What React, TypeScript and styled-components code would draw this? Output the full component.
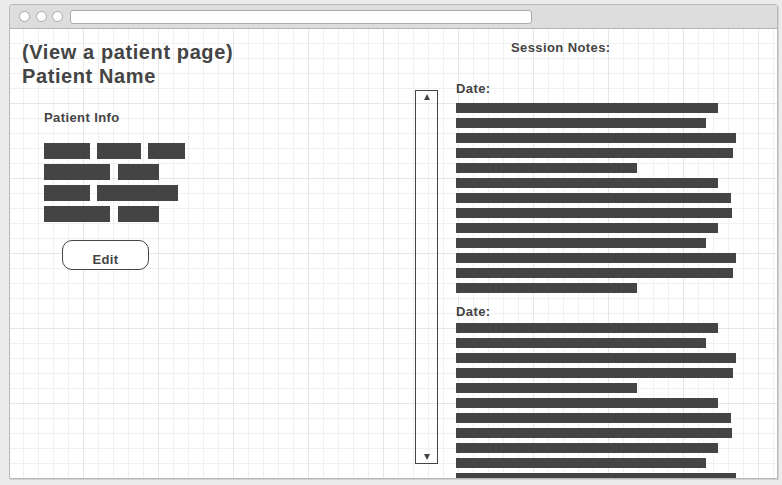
import React from "react";
import styled, { createGlobalStyle } from "styled-components";

const GlobalStyle = createGlobalStyle`
  html, body {
    margin: 0;
    padding: 0;
    background: #ececec;
  }
  body {
    font-family: "Liberation Sans", Arial, Helvetica, sans-serif;
    color: #444444;
  }
`;

const Page = styled.div`
  width: 782px;
  height: 485px;
  padding: 4px 0 0 9px;
  box-sizing: border-box;
`;

const Window = styled.div`
  width: 769px;
  height: 475px;
  box-sizing: border-box;
  border: 1px solid #b9b9b9;
  border-radius: 3px 3px 0 0;
  box-shadow: 1px 1px 0 #d2d2d2;
  display: flex;
  flex-direction: column;
  overflow: hidden;
  background: #ffffff;
`;

const TitleBar = styled.div`
  height: 23px;
  flex: none;
  background: #dddddd;
  border-bottom: 1px solid #b4b4b4;
  display: flex;
  align-items: center;
  padding-left: 9px;
  gap: 5.5px;
`;

const Dot = styled.span`
  width: 11px;
  height: 11px;
  box-sizing: border-box;
  border-radius: 50%;
  background: #ffffff;
  border: 1px solid #a8a8a8;
`;

const UrlBar = styled.div`
  margin-left: 1.5px;
  width: 462px;
  height: 14px;
  box-sizing: border-box;
  background: #ffffff;
  border: 1px solid #a9a9a9;
  border-radius: 3px;
`;

const Content = styled.div`
  flex: 1;
  position: relative;
  overflow: hidden;
  display: flex;
  padding: 11px 0 0 12px;
  background-color: #ffffff;
  background-image:
    linear-gradient(to right, #e6e6e6 1px, transparent 1px),
    linear-gradient(to bottom, #e6e6e6 1px, transparent 1px),
    linear-gradient(to right, #f0f0f0 1px, transparent 1px),
    linear-gradient(to bottom, #f0f0f0 1px, transparent 1px);
  background-size: 75px 75px, 75px 75px, 15px 15px, 15px 15px;
  background-position: -2px -1px;
`;

const LeftPanel = styled.div`
  width: 393px;
  flex: none;
  display: flex;
  flex-direction: column;
  align-items: flex-start;
`;

const PageTitle = styled.h1`
  margin: 0;
  font-size: 20px;
  line-height: 24px;
  letter-spacing: 0.6px;
  font-weight: bold;
  color: #444444;
`;

const InfoBlock = styled.div`
  margin: 22px 0 0 22px;
  display: flex;
  flex-direction: column;
  align-items: flex-start;
`;

const SmallHeading = styled.div`
  font-size: 13px;
  line-height: 15px;
  letter-spacing: 0.4px;
  font-weight: bold;
  color: #444444;
`;

const InfoRows = styled.div`
  margin-top: 18px;
  display: flex;
  flex-direction: column;
  gap: 5px;
`;

const InfoRow = styled.div<{ $gap: number }>`
  display: flex;
  gap: ${(p) => p.$gap}px;
`;

const Block = styled.span<{ $w: number }>`
  display: block;
  width: ${(p) => p.$w}px;
  height: 16px;
  background: #444444;
`;

const EditButton = styled.button`
  margin: 18px 0 0 18px;
  width: 87px;
  height: 30px;
  padding: 8px 0 0;
  border: 1px solid #444444;
  border-radius: 10px;
  background: #ffffff;
  font-family: "Liberation Sans", Arial, sans-serif;
  font-size: 13px;
  line-height: 15px;
  letter-spacing: 0.4px;
  font-weight: bold;
  color: #444444;
`;

const RightPanel = styled.div`
  flex: 1;
  display: flex;
  flex-direction: column;
`;

const NotesHeading = styled(SmallHeading)`
  padding-left: 96px;
`;

const NotesRow = styled.div`
  margin-top: 26px;
  display: flex;
  gap: 18px;
  align-items: flex-start;
`;

const ScrollTrack = styled.div`
  margin-top: 9px;
  width: 23px;
  height: 374px;
  box-sizing: border-box;
  border: 1px solid #444444;
  display: flex;
  flex-direction: column;
  justify-content: space-between;
  align-items: center;
  padding: 3px 0 3px;
`;

const Arrow = styled.span<{ $down?: boolean }>`
  width: 0;
  height: 0;
  border-left: 3px solid transparent;
  border-right: 3px solid transparent;
  ${(p) =>
    p.$down
      ? "border-top: 6px solid #444444;"
      : "border-bottom: 6px solid #444444;"}
`;

const Notes = styled.div`
  display: flex;
  flex-direction: column;
`;

const DateLabel = styled(SmallHeading)<{ $top: number; $bottom: number }>`
  margin-top: ${(p) => p.$top}px;
  margin-bottom: ${(p) => p.$bottom}px;
`;

const Line = styled.span<{ $w: number }>`
  display: block;
  width: ${(p) => p.$w}px;
  height: 10px;
  margin-bottom: 5px;
  background: #444444;
`;

const infoRows = [
  { gap: 7, widths: [46, 44, 37] },
  { gap: 8, widths: [66, 41] },
  { gap: 7, widths: [46, 81] },
  { gap: 8, widths: [66, 41] },
];

const noteLines = [262, 250, 280, 277, 181, 262, 275, 276, 262, 250, 280, 277, 181];

const sessions = [
  { top: 0, bottom: 7 },
  { top: 6, bottom: 4 },
];

export default function App() {
  return (
    <>
      <GlobalStyle />
      <Page>
        <Window>
          <TitleBar>
            <Dot />
            <Dot />
            <Dot />
            <UrlBar />
          </TitleBar>
          <Content>
            <LeftPanel>
              <PageTitle>
                (View a patient page)
                <br />
                Patient Name
              </PageTitle>
              <InfoBlock>
                <SmallHeading>Patient Info</SmallHeading>
                <InfoRows>
                  {infoRows.map((r, i) => (
                    <InfoRow key={i} $gap={r.gap}>
                      {r.widths.map((w, j) => (
                        <Block key={j} $w={w} />
                      ))}
                    </InfoRow>
                  ))}
                </InfoRows>
                <EditButton>Edit</EditButton>
              </InfoBlock>
            </LeftPanel>
            <RightPanel>
              <NotesHeading>Session Notes:</NotesHeading>
              <NotesRow>
                <ScrollTrack>
                  <Arrow />
                  <Arrow $down />
                </ScrollTrack>
                <Notes>
                  {sessions.map((s, i) => (
                    <React.Fragment key={i}>
                      <DateLabel $top={s.top} $bottom={s.bottom}>
                        Date:
                      </DateLabel>
                      {noteLines.map((w, j) => (
                        <Line key={j} $w={w} />
                      ))}
                    </React.Fragment>
                  ))}
                </Notes>
              </NotesRow>
            </RightPanel>
          </Content>
        </Window>
      </Page>
    </>
  );
}
